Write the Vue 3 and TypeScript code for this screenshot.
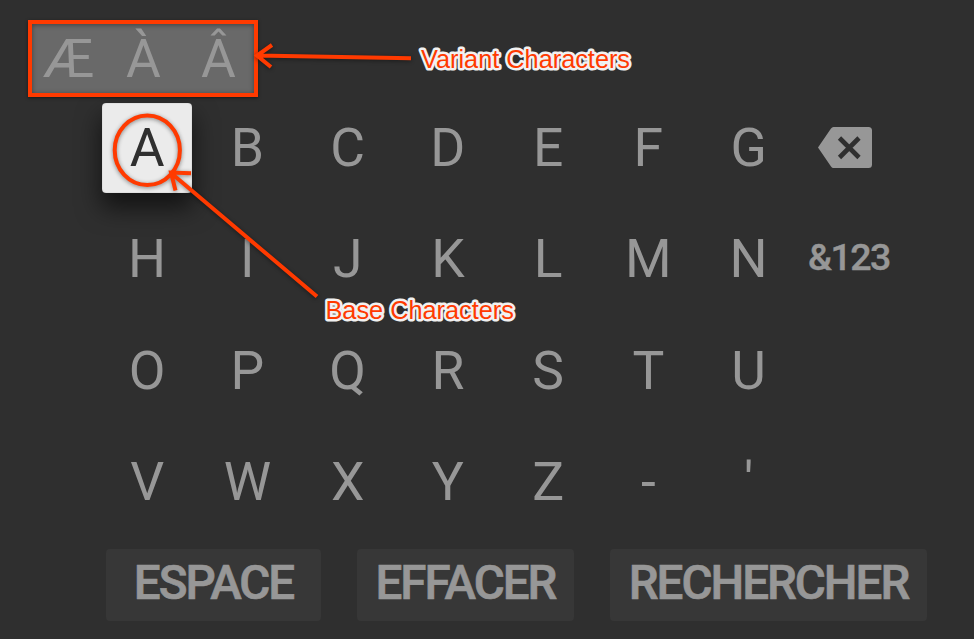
<script setup lang="ts">
interface Key {
  label: string
  kind?: 'selected' | 'symbols' | 'backspace'
}

const letters = (chars: string): Key[] => [...chars].map((label) => ({ label }))

const rows: Key[][] = [
  [{ label: 'A', kind: 'selected' }, ...letters('BCDEFG'), { label: '', kind: 'backspace' }],
  [...letters('HIJKLMN'), { label: '&123', kind: 'symbols' }],
  letters('OPQRSTU'),
  letters("VWXYZ-'"),
]

const variants: string[] = ['Æ', 'À', 'Â']
const actions: string[] = ['ESPACE', 'EFFACER', 'RECHERCHER']
</script>

<template>
  <main class="keyboard">
    <div class="keys">
      <div v-for="(row, r) in rows" :key="r" class="row">
        <div v-for="(key, k) in row" :key="k" class="cell">
          <div class="key" :class="key.kind">
            <svg v-if="key.kind === 'backspace'" class="backspace-icon" viewBox="0 0 54 41">
              <path
                class="body"
                d="M15.5 0H50.5Q54 0 54 3.5V37.5Q54 41 50.5 41H15.5Q14 41 13 39.5L0 20.5L13 1.5Q14 0 15.5 0Z"
              />
              <path class="cross" d="M21.5 11L41 30.5M41 11L21.5 30.5" />
            </svg>
            <template v-else>{{ key.label }}</template>
          </div>
        </div>
      </div>
    </div>

    <div class="actions">
      <div v-for="action in actions" :key="action" class="action" :class="action.toLowerCase()">
        <span>{{ action }}</span>
      </div>
    </div>

    <div class="variants">
      <span v-for="variant in variants" :key="variant" class="variant">{{ variant }}</span>
    </div>

    <svg class="annotations" viewBox="0 0 974 639">
      <g class="marks">
        <ellipse cx="147.3" cy="150.3" rx="32.6" ry="34.8" />
        <path d="M411 58.3L257 55.6M272 45L257 55.6L271 67" />
        <path d="M317 296.5L171 173M191 173.3L171 172.5L175.5 190.5" />
      </g>
      <text x="421" y="68">Variant Characters</text>
      <text x="325.5" y="319">Base Characters</text>
    </svg>
  </main>
</template>

<style>
body {
  margin: 0;
  background: #2f2f2f;
}
</style>

<style scoped>
.keyboard {
  position: relative;
  box-sizing: border-box;
  width: 974px;
  height: 639px;
  padding: 92px 47px 0 97px;
  overflow: hidden;
  background: #2f2f2f;
  color: #979797;
  font-family: Roboto, sans-serif;
  font-size: 53.4px;
  line-height: 1;
}

.row {
  display: grid;
  grid-template-columns: repeat(8, 100.25px);
  height: 111.3px;
}

.cell {
  display: flex;
  align-items: center;
  justify-content: center;
}

.key {
  display: flex;
  align-items: center;
  justify-content: center;
  box-sizing: border-box;
  width: 90px;
  height: 90px;
}

.selected {
  border-radius: 4px;
  background: #ebebeb;
  color: #2f2f2f;
  box-shadow: 0 14px 24px 1px rgba(0, 0, 0, 0.6), inset 0 0 1px rgba(0, 0, 0, 0.45);
}

.symbols {
  padding-bottom: 2px;
  font-size: 37.5px;
  font-weight: 500;
  letter-spacing: -1.5px;
  -webkit-text-stroke: 0.4px #979797;
}

.backspace {
  padding: 0 8px 1px 0;
}

.backspace-icon {
  width: 54px;
  height: 41px;
}

.body {
  fill: #979797;
}

.cross {
  fill: none;
  stroke: #2f2f2f;
  stroke-width: 4.6;
}

.actions {
  display: flex;
  gap: 36px;
  margin: 11.5px 0 0 9px;
}

.action {
  display: flex;
  align-items: center;
  justify-content: center;
  height: 72px;
  border-radius: 4px;
  background: #373737;
  font-size: 47.5px;
  font-weight: 500;
  letter-spacing: -2px;
  -webkit-text-stroke: 0.7px #979797;
}

.action span {
  margin-top: -1px;
}

.espace {
  width: 215px;
}

.effacer {
  width: 217px;
}

.rechercher {
  width: 317px;
}

.variants {
  position: absolute;
  top: 19.5px;
  left: 28px;
  box-sizing: border-box;
  display: grid;
  grid-template-columns: repeat(3, 75px);
  align-items: center;
  justify-content: center;
  width: 230px;
  height: 77.5px;
  padding: 1px 0 0 1px;
  border: 4px solid #ff3a00;
  background: #696969;
  box-shadow: 0 1px 3px rgba(0, 0, 0, 0.5), inset 0 1px 5px rgba(0, 0, 0, 0.4);
}

.variant {
  text-align: center;
}

.annotations {
  position: absolute;
  inset: 0;
  width: 974px;
  height: 639px;
}

.marks {
  fill: none;
  stroke: #ff3a00;
  stroke-width: 4;
  filter: drop-shadow(0 1px 2px rgba(0, 0, 0, 0.45));
}

.annotations text {
  fill: #ff3a00;
  stroke: #f1f1f1;
  stroke-width: 5px;
  stroke-linejoin: round;
  paint-order: stroke;
  font: 25.3px 'Liberation Sans', Arial, sans-serif;
}
</style>
